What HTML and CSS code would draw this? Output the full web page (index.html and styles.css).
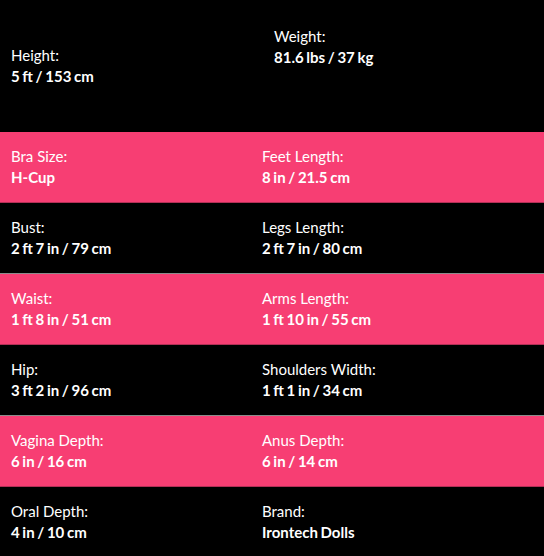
FILE: index.html
```html
<!DOCTYPE html>
<html>
<head>
<meta charset="utf-8">
<link rel="stylesheet" href="styles.css">
</head>
<body>
<div class="specs">
  <div class="row row-top">
    <div class="cell cell-height"><div class="label">Height:</div><div class="value">5 ft / 153 cm</div></div>
    <div class="cell cell-weight"><div class="label">Weight:</div><div class="value">81.6 lbs / 37 kg</div></div>
  </div>
  <div class="row pink">
    <div class="cell"><div class="label">Bra Size:</div><div class="value">H-Cup</div></div>
    <div class="cell"><div class="label">Feet Length:</div><div class="value">8 in / 21.5 cm</div></div>
  </div>
  <div class="row dark">
    <div class="cell"><div class="label">Bust:</div><div class="value">2 ft 7 in / 79 cm</div></div>
    <div class="cell"><div class="label">Legs Length:</div><div class="value">2 ft 7 in / 80 cm</div></div>
  </div>
  <div class="row pink">
    <div class="cell"><div class="label">Waist:</div><div class="value">1 ft 8 in / 51 cm</div></div>
    <div class="cell"><div class="label">Arms Length:</div><div class="value">1 ft 10 in / 55 cm</div></div>
  </div>
  <div class="row dark">
    <div class="cell"><div class="label">Hip:</div><div class="value">3 ft 2 in / 96 cm</div></div>
    <div class="cell"><div class="label">Shoulders Width:</div><div class="value">1 ft 1 in / 34 cm</div></div>
  </div>
  <div class="row pink">
    <div class="cell"><div class="label">Vagina Depth:</div><div class="value">6 in / 16 cm</div></div>
    <div class="cell"><div class="label">Anus Depth:</div><div class="value">6 in / 14 cm</div></div>
  </div>
  <div class="row dark last">
    <div class="cell"><div class="label">Oral Depth:</div><div class="value">4 in / 10 cm</div></div>
    <div class="cell"><div class="label">Brand:</div><div class="value">Irontech Dolls</div></div>
  </div>
</div>
</body>
</html>
```
FILE: styles.css
```css
html, body {
  margin: 0;
  padding: 0;
  background: #000;
}
body {
  font-family: Lato, "Open Sans", sans-serif;
  color: #fff;
  font-size: 15px;
  line-height: 21px;
}
.specs {
  display: flex;
  flex-direction: column;
}
.row {
  display: grid;
  grid-template-columns: 251px 1fr;
  height: 70px;
}
.row-top {
  height: 132px;
}
.pink {
  background: #f73e73;
  border-bottom: 1px solid #b23056;
}
.dark {
  background: #000;
  border-bottom: 1px solid #8c8c8c;
}
.dark.last {
  border-bottom: none;
}
.cell {
  padding: 14px 11px;
}
.cell-height {
  align-self: center;
  padding: 0 11px;
}
.cell-weight {
  padding: 26px 11px 0 23px;
}
.label {
  font-weight: 400;
}
.value {
  font-weight: 700;
  word-spacing: -1px;
}
```
